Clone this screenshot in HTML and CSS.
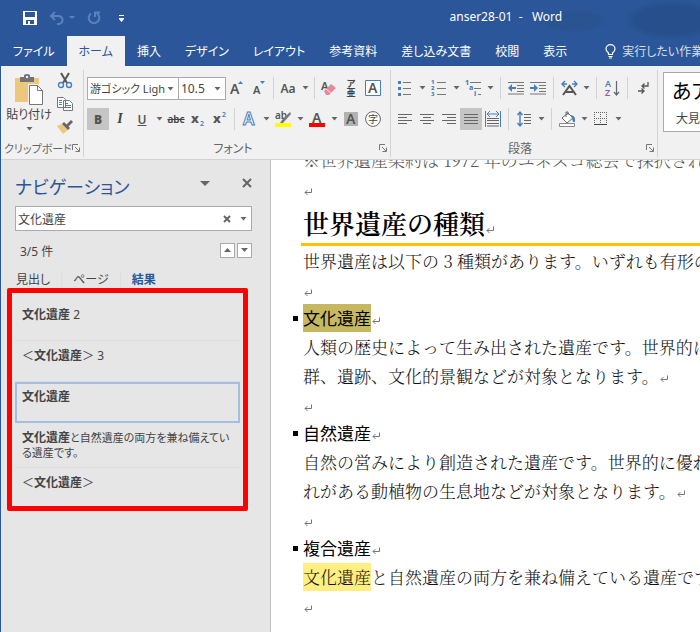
FILE: index.html
```html
<!DOCTYPE html>
<html lang="ja">
<head>
    <meta charset="UTF-8">
    <meta name="viewport" content="width=device-width, initial-scale=1.0">
    <title>anser28-01 - Word</title>
    <link rel="stylesheet" href="styles.css">
</head>
<body>
    <!-- shared symbols -->
    <svg class="symbols" aria-hidden="true">
        <symbol id="caret" viewBox="0 0 7 4"><path d="M0.5 0h6L3.5 3.6z" fill="#666"/></symbol>
        <symbol id="launcher" viewBox="0 0 8 8"><path d="M0.5 6V0.5H6M3 3l4 4M7.500 3.500v4h-4" fill="none" stroke="#777"/></symbol>
        <symbol id="mark" viewBox="0 0 8 8"><path d="M7.500 0.500V4.500H1M3.500 2L1 4.500L3.500 7" fill="none" stroke="#777"/></symbol>
    </svg>

    <div class="window">
        <header class="top">
            <div class="titlebar">
                <div class="quick">
                    <button class="quick-btn" aria-label="上書き保存">
                        <svg width="14" height="14" viewBox="0 0 14 14"><path d="M0 0h14v14H0z" fill="#fff"/><path d="M2 1h10v5H2zM3 9h8v4H3z" fill="#2b579a"/><path d="M5 10h2v3H5z" fill="#fff"/></svg>
                    </button>
                    <button class="quick-btn" aria-label="元に戻す">
                        <svg width="26" height="14" viewBox="0 0 26 14"><path d="M6 1L2 5l4 4M2 5h7a4 4 0 0 1 1 8H8" fill="none" stroke="#5d82bb" stroke-width="2"/><path d="M20 5h6l-3 3z" fill="#5d82bb"/></svg>
                    </button>
                    <button class="quick-btn" aria-label="繰り返し">
                        <svg width="14" height="14" viewBox="0 0 14 14"><path d="M4 2.500a5.300 5.300 0 1 0 6 0M8 6V1.500h5" fill="none" stroke="#5d82bb" stroke-width="2"/></svg>
                    </button>
                    <button class="quick-btn" aria-label="クイックアクセスのカスタマイズ">
                        <svg width="5" height="7" viewBox="0 0 5 7"><path d="M0 0h5v1H0zM0 3h5v1L2.500 7L0 4z" fill="#fff"/></svg>
                    </button>
                </div>
                <div class="title">anser28-01 &nbsp;- &nbsp;&nbsp;Word</div>
            </div>
            <nav class="tabs">
                <button class="tab">ファイル</button>
                <button class="tab active">ホーム</button>
                <button class="tab">挿入</button>
                <button class="tab">デザイン</button>
                <button class="tab">レイアウト</button>
                <button class="tab">参考資料</button>
                <button class="tab">差し込み文書</button>
                <button class="tab">校閲</button>
                <button class="tab">表示</button>
                <button class="tab tell">
                    <svg width="11" height="15" viewBox="0 0 11 15"><path d="M3.500 10.500V9C2 7.800 1 6.500 1 5a4.500 4.300 0 0 1 9 0c0 1.500-1 2.800-2.500 4v1.500zM3.500 12.500h4M4 14h3" fill="none" stroke="#fff" stroke-width="1.200"/></svg>
                    実行したい作業
                </button>
            </nav>
        </header>

        <div class="ribbon">
            <section class="group clipboard">
                <div class="group-main">
                    <button class="paste">
                        <svg width="28" height="31" viewBox="0 0 28 31"><path d="M0 4h24v24H0z" fill="#edc77c"/><path d="M5 3h4V1q3-2 6 0v2h4v5H5z" fill="#737373"/><circle cx="12" cy="3" r="1.200" fill="#f1f1f1"/><path d="M13 10h10l5 5v16H13z" fill="#f1f1f1"/><path d="M14.500 11.500h8l5 5v14h-13z" fill="#fff" stroke="#777"/><path d="M22.500 11.500v5h5" fill="none" stroke="#777"/></svg>
                        <span>貼り付け</span>
                        <svg class="caret" width="7" height="4"><use href="#caret"/></svg>
                    </button>
                    <div class="clip-tools">
                        <button class="tool" aria-label="切り取り">
                            <svg width="16" height="16" viewBox="0 0 16 16"><path d="M4 0l6 10M12 0L6 10" stroke="#555" stroke-width="2"/><circle cx="4" cy="12" r="2.500" fill="none" stroke="#4a7ebb" stroke-width="1.400"/><circle cx="12" cy="12" r="2.500" fill="none" stroke="#4a7ebb" stroke-width="1.400"/></svg>
                        </button>
                        <button class="tool" aria-label="コピー">
                            <svg width="16" height="16" viewBox="0 0 16 16"><path d="M0.500 1.500h6l2 2v8h-8zM6.500 4.500h6l3 3v7h-9z" fill="#fff" stroke="#777"/><path d="M2 4.500h3M2 6.500h3M2 8.500h3M8 7.500h3M8 9.500h6M8 11.500h6" stroke="#4a7ebb"/></svg>
                        </button>
                        <button class="tool" aria-label="書式のコピー">
                            <svg width="16" height="16" viewBox="0 0 16 16"><path d="M0 7l5-2 6 6-5 4z" fill="#edc77c"/><path d="M5 5l2-2 6 6-2 2z" fill="#666"/><path d="M9 6l5-5 2 2-5 5z" fill="#666"/></svg>
                        </button>
                    </div>
                </div>
                <div class="group-label"><span>クリップボード</span><button class="launch" aria-label="クリップボードの設定"><svg width="8" height="8"><use href="#launcher"/></svg></button></div>
            </section>

            <section class="group font">
                <div class="group-main rows">
                    <div class="row">
                        <select class="combo font-name" aria-label="フォント"><option>游ゴシック Ligh</option></select>
                        <select class="combo font-size" aria-label="フォント サイズ"><option>10.5</option></select>
                        <button class="tool" aria-label="フォントの拡大"><svg width="14" height="16" viewBox="0 0 14 16"><text class="glyph" x="0" y="14" font-size="14">A</text><path d="M8 4h5l-2.500-3z" fill="#4a7ebb"/></svg></button>
                        <button class="tool" aria-label="フォントの縮小"><svg width="14" height="16" viewBox="0 0 14 16"><text class="glyph" x="1" y="14" font-size="11">A</text><path d="M8 1h5l-2.500 3z" fill="#4a7ebb"/></svg></button>
                        <i class="sep"></i>
                        <button class="tool letters" aria-label="文字種の変換">Aa</button>
                        <button class="drop" aria-label="文字種の一覧"><svg class="caret" width="7" height="4"><use href="#caret"/></svg></button>
                        <i class="sep"></i>
                        <button class="tool" aria-label="書式のクリア"><svg width="16" height="16" viewBox="0 0 16 16"><text class="glyph" x="0" y="10" font-size="11">A</text><path d="M3 11l7-7 5 4-7 7-3 0z" fill="#e8899a"/><path d="M5 9l5 4" stroke="#f8dfe3"/></svg></button>
                        <button class="tool ruby" aria-label="ルビ"><span>ア</span><span>亜</span></button>
                        <button class="tool" aria-label="囲み線"><svg width="16" height="16" viewBox="0 0 16 16"><path d="M0.500 0.500h15v15h-15z" fill="#fff" stroke="#4a7ebb"/><text class="glyph" x="3" y="13" font-size="14">A</text></svg></button>
                    </div>
                    <div class="row">
                        <button class="tool on letters" aria-label="太字"><b>B</b></button>
                        <button class="tool italic" aria-label="斜体">I</button>
                        <button class="tool letters underline" aria-label="下線">U</button>
                        <button class="drop" aria-label="下線の種類"><svg class="caret" width="7" height="4"><use href="#caret"/></svg></button>
                        <button class="tool strike" aria-label="取り消し線">abc</button>
                        <button class="tool" aria-label="下付き"><svg width="16" height="16" viewBox="0 0 16 16"><text class="glyph bold" x="1" y="12" font-size="13">x</text><text class="glyph blue" x="10" y="15" font-size="7">2</text></svg></button>
                        <button class="tool" aria-label="上付き"><svg width="16" height="16" viewBox="0 0 16 16"><text class="glyph bold" x="1" y="12" font-size="13">x</text><text class="glyph blue" x="10" y="6" font-size="7">2</text></svg></button>
                        <i class="sep"></i>
                        <button class="tool" aria-label="文字の効果"><svg width="16" height="16" viewBox="0 0 16 16"><text x="2" y="14" class="effect" font-size="17">A</text></svg></button>
                        <button class="drop" aria-label="効果の一覧"><svg class="caret" width="7" height="4"><use href="#caret"/></svg></button>
                        <button class="tool" aria-label="蛍光ペンの色"><svg width="17" height="16" viewBox="0 0 17 16"><text class="glyph" x="0" y="8" font-size="10">ab</text><path d="M15 1L7 9l-2 3h3l8-9z" fill="#777"/><path d="M0 12h16v4H0z" fill="#ff0"/></svg></button>
                        <button class="drop" aria-label="蛍光ペンの一覧"><svg class="caret" width="7" height="4"><use href="#caret"/></svg></button>
                        <button class="tool" aria-label="フォントの色"><svg width="16" height="16" viewBox="0 0 16 16"><text class="glyph" x="3" y="12" font-size="14">A</text><path d="M0 12h16v4H0z" fill="#f00"/></svg></button>
                        <button class="drop" aria-label="色の一覧"><svg class="caret" width="7" height="4"><use href="#caret"/></svg></button>
                        <button class="tool" aria-label="文字の網かけ"><svg width="14" height="14" viewBox="0 0 14 14"><path d="M0 0h14v14H0z" fill="#b2b2b2"/><text class="glyph" x="2" y="12" font-size="14">A</text></svg></button>
                        <button class="tool" aria-label="囲い文字"><svg width="16" height="16" viewBox="0 0 16 16"><circle cx="8" cy="8" r="7.400" fill="#fff" stroke="#666"/><text x="3" y="12" font-size="10" fill="#444">字</text></svg></button>
                    </div>
                </div>
                <div class="group-label"><span>フォント</span><button class="launch" aria-label="フォントの設定"><svg width="8" height="8"><use href="#launcher"/></svg></button></div>
            </section>

            <section class="group paragraph">
                <div class="group-main rows">
                    <div class="row">
                        <button class="tool" aria-label="箇条書き"><svg width="16" height="16" viewBox="0 0 16 16"><path d="M1 1h3v3H1zM1 7h3v3H1zM1 13h3v3H1z" fill="#4a7ebb"/><path d="M6 2.500h8M6 8.500h8M6 14.500h8" stroke="#777"/></svg></button>
                        <button class="drop" aria-label="行頭文字"><svg class="caret" width="7" height="4"><use href="#caret"/></svg></button>
                        <button class="tool" aria-label="段落番号"><svg width="16" height="16" viewBox="0 0 16 16"><g class="glyph blue bold" font-size="6"><text x="0" y="4">1</text><text x="0" y="10">2</text><text x="0" y="16">3</text></g><path d="M6 2.500h9M6 8.500h9M6 14.500h9" stroke="#777"/></svg></button>
                        <button class="drop" aria-label="番号の種類"><svg class="caret" width="7" height="4"><use href="#caret"/></svg></button>
                        <button class="tool" aria-label="アウトライン"><svg width="17" height="16" viewBox="0 0 17 16"><g class="glyph blue bold" font-size="7"><text x="0" y="5">1</text><text x="4" y="10">a</text><text x="9" y="16">i</text></g><path d="M5 2.500h11M9 8.500h7M13 14.500h3" stroke="#777"/></svg></button>
                        <button class="drop" aria-label="アウトラインの種類"><svg class="caret" width="7" height="4"><use href="#caret"/></svg></button>
                        <i class="sep"></i>
                        <button class="tool" aria-label="インデントを減らす"><svg width="16" height="14" viewBox="0 0 16 14"><path d="M0 1.500h16M9 4.500h7M9 7.500h7M9 10.500h7M0 13h16" stroke="#777"/><path d="M0 7l4-4v3h4v2H4v3z" fill="#4a7ebb"/></svg></button>
                        <button class="tool" aria-label="インデントを増やす"><svg width="16" height="14" viewBox="0 0 16 14"><path d="M0 1.500h16M9 4.500h7M9 7.500h7M9 10.500h7M0 13h16" stroke="#777"/><path d="M8 7L4 3v3H0v2h4v3z" fill="#4a7ebb"/></svg></button>
                        <i class="sep"></i>
                        <button class="tool" aria-label="拡張書式"><svg width="17" height="15" viewBox="0 0 17 15"><path d="M2 14L8.500 5L15 14M5 11h7" fill="none" stroke="#555" stroke-width="2"/><path d="M4 0L1 3l3 3M1 3h5M13 0l3 3-3 3M16 3h-5" fill="none" stroke="#4a7ebb" stroke-width="1.400"/></svg></button>
                        <button class="drop" aria-label="拡張書式の一覧"><svg class="caret" width="7" height="4"><use href="#caret"/></svg></button>
                        <i class="sep"></i>
                        <button class="tool" aria-label="並べ替え"><svg width="15" height="17" viewBox="0 0 15 17"><text class="glyph blue" x="0" y="7" font-size="9">A</text><text class="glyph purple" x="0" y="16" font-size="9">Z</text><path d="M11.500 1v13M9 12l2.500 3L14 12" fill="none" stroke="#666" stroke-width="1.200"/></svg></button>
                        <i class="sep"></i>
                        <button class="tool" aria-label="編集記号の表示"><svg width="11" height="13" viewBox="0 0 11 13"><path d="M10 0v4H4M6.500 1.500L4 4l2.500 2.500M0 9h6M3.500 6.500L6 9l-2.500 2.500" fill="none" stroke="#555" stroke-width="1.300"/></svg></button>
                    </div>
                    <div class="row">
                        <button class="tool" aria-label="左揃え"><svg width="14" height="12" viewBox="0 0 14 12"><path d="M0 1.500h14M0 4.500h9M0 7.500h14M0 10.500h9" stroke="#666"/></svg></button>
                        <button class="tool" aria-label="中央揃え"><svg width="14" height="12" viewBox="0 0 14 12"><path d="M0 1.500h14M3 4.500h8M0 7.500h14M3 10.500h8" stroke="#666"/></svg></button>
                        <button class="tool" aria-label="右揃え"><svg width="14" height="12" viewBox="0 0 14 12"><path d="M0 1.500h14M5 4.500h9M0 7.500h14M5 10.500h9" stroke="#666"/></svg></button>
                        <button class="tool on" aria-label="両端揃え"><svg width="14" height="12" viewBox="0 0 14 12"><path d="M0 1.500h14M0 4.500h14M0 7.500h14M0 10.500h14" stroke="#666"/></svg></button>
                        <button class="tool" aria-label="均等割り付け"><svg width="16" height="16" viewBox="0 0 16 16"><path d="M0.500 0v16M15.500 0v16M2 3h12M5 0L2 3l3 3M11 0l3 3-3 3" fill="none" stroke="#4a7ebb"/><path d="M2 7.500h12M2 9.500h12M2 12.500h12M2 15h12" stroke="#666"/></svg></button>
                        <i class="sep"></i>
                        <button class="tool" aria-label="行間"><svg width="15" height="16" viewBox="0 0 15 16"><path d="M3 1v14M0.500 4L3 1l2.500 3M0.500 12L3 15l2.500-3" fill="none" stroke="#4a7ebb" stroke-width="1.400"/><path d="M7 3.500h7M7 6.500h7M7 9.500h7M7 12.500h7" stroke="#666"/></svg></button>
                        <button class="drop" aria-label="行間の一覧"><svg class="caret" width="7" height="4"><use href="#caret"/></svg></button>
                        <i class="sep"></i>
                        <button class="tool" aria-label="塗りつぶし"><svg width="17" height="16" viewBox="0 0 17 16"><path d="M3 7l6-5 5 5-6 5z" fill="#fff" stroke="#666"/><path d="M7 6V1h2v3" fill="none" stroke="#666"/><path d="M12 4q5 1 4 7l-2 0z" fill="#4a7ebb"/><path d="M0.500 12.500h15v3h-15z" fill="#fff" stroke="#888"/></svg></button>
                        <button class="drop" aria-label="塗りつぶしの色"><svg class="caret" width="7" height="4"><use href="#caret"/></svg></button>
                        <button class="tool" aria-label="罫線"><svg width="14" height="14" viewBox="0 0 14 14"><path d="M0.500 0v13M6.500 0v13M12.500 0v13M0 0.500h13M0 6.500h13" fill="none" stroke="#666" stroke-dasharray="1 1"/><path d="M0 12.500h13" stroke="#444"/></svg></button>
                        <button class="drop" aria-label="罫線の一覧"><svg class="caret" width="7" height="4"><use href="#caret"/></svg></button>
                    </div>
                </div>
                <div class="group-label"><span>段落</span><button class="launch" aria-label="段落の設定"><svg width="8" height="8"><use href="#launcher"/></svg></button></div>
            </section>

            <section class="group styles">
                <button class="style-card">
                    <span class="sample">あア</span>
                    <span class="style-name">大見</span>
                </button>
            </section>
        </div>

        <div class="workspace">
            <aside class="pane">
                <div class="pane-head">
                    <h1>ナビゲーション</h1>
                    <button class="pane-btn" aria-label="作業ウィンドウのオプション"><svg width="10" height="5" viewBox="0 0 10 5"><path d="M0 0h10L5 5z" fill="#666"/></svg></button>
                    <button class="pane-btn" aria-label="閉じる"><svg width="10" height="10" viewBox="0 0 10 10"><path d="M1 1l8 8M9 1L1 9" stroke="#666" stroke-width="2"/></svg></button>
                </div>
                <div class="search">
                    <input type="text" value="文化遺産" aria-label="文書の検索">
                    <button aria-label="検索のクリア"><svg width="8" height="8" viewBox="0 0 8 8"><path d="M1 1l6 6M7 1L1 7" stroke="#666" stroke-width="2"/></svg></button>
                    <button aria-label="検索オプション"><svg class="caret" width="7" height="4"><use href="#caret"/></svg></button>
                </div>
                <div class="count">
                    <span>3/5 件</span>
                    <button aria-label="前の結果"><svg width="7" height="4" viewBox="0 0 7 4"><path d="M0 4h7L3.500 0z" fill="#666"/></svg></button>
                    <button aria-label="次の結果"><svg width="7" height="4" viewBox="0 0 7 4"><path d="M0 0h7L3.500 4z" fill="#666"/></svg></button>
                </div>
                <div class="pane-tabs">
                    <button>見出し</button>
                    <button>ページ</button>
                    <button class="current">結果</button>
                </div>
                <ul class="results">
                    <li><b>文化遺産</b> 2</li>
                    <li>＜<b>文化遺産</b>＞ 3</li>
                    <li class="selected"><b>文化遺産</b></li>
                    <li><b>文化遺産</b><span class="excerpt">と自然遺産の両方を兼ね備えてい<br>る遺産です。</span></li>
                    <li>＜<b>文化遺産</b>＞</li>
                </ul>
            </aside>

            <main class="doc">
                <p class="cut">※世界遺産条約は 1972 年のユネスコ総会で採択され</p>
                <p><svg class="mark"><use href="#mark"/></svg></p>
                <h2>世界遺産の種類<svg class="mark"><use href="#mark"/></svg></h2>
                <p>世界遺産は以下の 3 種類があります。いずれも有形の</p>
                <p><svg class="mark"><use href="#mark"/></svg></p>
                <h3><mark class="hit">文化遺産</mark><svg class="mark"><use href="#mark"/></svg></h3>
                <p>人類の歴史によって生み出された遺産です。世界的に</p>
                <p>群、遺跡、文化的景観などが対象となります。<svg class="mark"><use href="#mark"/></svg></p>
                <p><svg class="mark"><use href="#mark"/></svg></p>
                <h3>自然遺産<svg class="mark"><use href="#mark"/></svg></h3>
                <p>自然の営みにより創造された遺産です。世界的に優れ</p>
                <p>れがある動植物の生息地などが対象となります。<svg class="mark"><use href="#mark"/></svg></p>
                <p><svg class="mark"><use href="#mark"/></svg></p>
                <h3>複合遺産<svg class="mark"><use href="#mark"/></svg></h3>
                <p><mark>文化遺産</mark>と自然遺産の両方を兼ね備えている遺産です</p>
                <p><svg class="mark"><use href="#mark"/></svg></p>
            </main>
        </div>
    </div>
</body>
</html>
```
FILE: styles.css
```css
* {
    box-sizing: border-box;
}

body {
    margin: 0;
    font-family: "Noto Sans", "Noto Sans CJK JP", sans-serif;
    font-size: 12px;
    color: #444;
    font-feature-settings: "palt";
}

button {
    font: inherit;
    font-feature-settings: inherit;
    color: inherit;
    background: none;
    border: 0;
    padding: 0;
    white-space: nowrap;
    flex-shrink: 0;
}

svg {
    display: block;
    overflow: visible;
}

.symbols {
    display: none;
}

.window {
    display: flex;
    flex-direction: column;
    min-height: 100vh;
    border-left: 1px solid #2b579a;
    overflow: hidden;
    background: #fff;
}

/* title bar and tabs */
.top {
    background:
        radial-gradient(ellipse 50px 20px at 96% 20px, #264f8b 70%, transparent),
        radial-gradient(ellipse 36px 12px at 82% 21px, #295391 70%, transparent),
        #2b579a;
    color: #fff;
}

.titlebar {
    display: flex;
    align-items: center;
    height: 36px;
}

.quick {
    display: flex;
    align-items: center;
    gap: 12px;
    flex: 1;
    padding-left: 22px;
}

.quick-btn {
    display: flex;
}

.quick-btn:last-child {
    margin-left: 6px;
}

.title {
    flex: 1;
    padding: 0 0 4px 176px;
    white-space: nowrap;
}

.tabs {
    display: flex;
    height: 30px;
    overflow: hidden;
}

.tab {
    padding: 0 12px;
}

.tab.active {
    background: #f1f1f1;
    color: #2b579a;
}

.tell {
    display: flex;
    align-items: center;
    gap: 6px;
    margin-left: 14px;
    padding-right: 0;
    color: #d5deec;
}

/* ribbon */
.ribbon {
    display: flex;
    height: 94px;
    padding: 4px 0 2px;
    background: #f1f1f1;
    border-bottom: 1px solid #d2d2d2;
    overflow: hidden;
}

.group {
    display: flex;
    flex-direction: column;
    flex-shrink: 0;
    padding: 0 3px;
    border-right: 1px solid #d2d2d2;
}

.group-main {
    display: flex;
    flex: 1;
}

.rows {
    flex-direction: column;
    gap: 9px;
    padding-top: 7px;
}

.row {
    display: flex;
    height: 22px;
}

.tool,
.drop {
    display: flex;
    align-items: center;
    justify-content: center;
    width: 22px;
    height: 22px;
}

.drop {
    width: 12px;
}

.on {
    background: #c5c5c5;
}

.sep {
    width: 1px;
    margin: 0 3px;
    background: #d2d2d2;
}

.paragraph .sep {
    margin: 0 4px;
}

.group-label {
    display: flex;
    align-items: center;
    height: 18px;
    color: #666;
}

.group-label span {
    flex: 1;
    text-align: center;
    white-space: nowrap;
}

.launch {
    width: 8px;
}

.clipboard {
    width: 83px;
}

.clipboard .group-label {
    font-size: 11px;
}

.clipboard .group-label span {
    text-align: left;
}

.paste {
    display: flex;
    flex-direction: column;
    align-items: center;
    width: 50px;
    padding-top: 4px;
}

.paste span {
    line-height: 20px;
}

.paste .caret {
    margin-top: 2px;
}

.clip-tools {
    display: flex;
    flex-direction: column;
    gap: 1px;
}

.font {
    width: 307px;
}

.paragraph {
    width: 267px;
}

.combo {
    appearance: none;
    height: 23px;
    padding: 0 2px;
    border: 1px solid #aaa;
    border-radius: 0;
    background: #fff url("data:image/svg+xml,%3Csvg xmlns='http://www.w3.org/2000/svg' width='7' height='4'%3E%3Cpath d='M.5 0h6l-3 3.600z' fill='%23666'/%3E%3C/svg%3E") no-repeat right 4px center;
    color: #444;
    font: inherit;
    font-feature-settings: inherit;
}

.font-name {
    width: 92px;
    font-size: 11px;
}

.font-size {
    width: 48px;
    margin-left: -1px;
}

.letters {
    font-weight: 600;
    color: #555;
}

.underline {
    text-decoration: underline;
}

.italic {
    font-family: "Liberation Serif", serif;
    font-size: 14px;
    font-style: italic;
    font-weight: bold;
}

.strike {
    font-size: 10px;
    font-weight: 600;
    text-decoration: line-through;
}

.ruby {
    flex-direction: column;
    font-size: 9px;
    font-weight: bold;
    line-height: 9px;
}

.glyph {
    font-weight: 600;
    fill: #555;
}

.bold {
    font-weight: 800;
}

.blue {
    fill: #4a7ebb;
}

.purple {
    fill: #8a56b0;
}

.effect {
    font-weight: 600;
    fill: #fff;
    stroke: #4a7ebb;
}

.styles {
    flex: 1;
    min-width: 0;
    padding-left: 5px;
    padding-right: 0;
    border-right: 0;
}

.style-card {
    display: flex;
    flex-direction: column;
    align-items: flex-start;
    width: 76px;
    height: 60px;
    margin-top: 2px;
    padding-left: 8px;
    border: 1px solid #aaa;
    background: #fff;
}

.sample {
    font-size: 20px;
    line-height: 38px;
    color: #000;
}

.style-name {
    padding-left: 4px;
    line-height: 16px;
}

/* navigation pane */
.workspace {
    display: flex;
    flex: 1;
}

.pane {
    width: 270px;
    flex-shrink: 0;
    padding: 15px 18px 0 14px;
    background: #e6e6e6;
    border-right: 1px solid #c0c0c0;
}

.pane-head {
    display: flex;
    align-items: center;
    height: 24px;
}

.pane-head h1 {
    flex: 1;
    margin: 0;
    font-size: 18px;
    font-weight: normal;
    line-height: 24px;
    color: #2b579a;
}

.pane-btn {
    display: flex;
    justify-content: center;
    width: 10px;
    margin: 0 0 8px 32px;
}

.search {
    display: flex;
    align-items: center;
    height: 25px;
    margin-top: 7px;
    border: 1px solid #ababab;
    background: #fff;
}

.search input {
    flex: 1;
    min-width: 0;
    padding: 0 2px;
    border: 0;
    background: none;
    color: #444;
    font: inherit;
    font-feature-settings: inherit;
}

.search button {
    margin-right: 9px;
}

.search button:last-child {
    margin-right: 4px;
}

.count {
    display: flex;
    align-items: center;
    gap: 2px;
    height: 40px;
    padding-left: 5px;
}

.count span {
    flex: 1;
}

.count button {
    display: flex;
    align-items: center;
    justify-content: center;
    width: 15px;
    height: 15px;
    margin-bottom: 2px;
    border: 1px solid #ababab;
    background: #fff;
}

.pane-tabs {
    display: flex;
    height: 17px;
    line-height: 17px;
}

.pane-tabs button {
    padding: 0 11px;
    border-right: 1px solid #dedede;
}

.pane-tabs button:first-child {
    padding-left: 1px;
}

.pane-tabs .current {
    border: 0;
    font-weight: bold;
    color: #2b579a;
}

/* list of hits, framed in red */
.results {
    margin: 0 4px 0 -8px;
    padding: 7px 3px 0;
    border: 5px solid #f00;
    border-radius: 2px;
    list-style: none;
    line-height: 15px;
}

.results li {
    min-height: 41px;
    padding: 7px 0 7px 7px;
    border-bottom: 1px solid #dcdcdc;
    white-space: nowrap;
}

.results .selected {
    padding: 5px;
    border: 2px solid #a3bde3;
}

.results li:last-child {
    min-height: 38px;
    border: 0;
}

.excerpt {
    font-size: 11px;
}

/* document */
.doc {
    flex: 1;
    min-width: 0;
    padding-left: 30px;
    overflow: hidden;
    font-family: "Noto Serif CJK JP", "Noto Sans CJK JP", serif;
    font-size: 17px;
    font-feature-settings: normal;
    color: #111;
    white-space: nowrap;
}

.doc p,
.doc h3 {
    margin: 0;
    padding-left: 2px;
    font-size: 17px;
    font-weight: 300;
    line-height: 29px;
}

.doc .cut {
    margin-top: -15px;
    color: #555;
}

.doc h2 {
    margin: 0;
    padding-left: 2px;
    border-bottom: 3px solid #ffc000;
    font-size: 26px;
    font-weight: 600;
    line-height: 40px;
    color: #000;
}

.doc h3 {
    display: flex;
    align-items: center;
    margin-left: -8px;
    padding: 0;
    font-family: "Noto Sans CJK JP", sans-serif;
    font-weight: normal;
    line-height: 28px;
    color: #000;
}

.doc h3::before {
    content: "";
    width: 5px;
    height: 5px;
    margin-right: 5px;
    background: #000;
}

mark {
    display: inline-block;
    background: #ffee80;
    color: inherit;
    line-height: 28px;
}

.hit {
    background: #c6b860;
}

.mark {
    display: inline-block;
    width: 8px;
    height: 8px;
    margin-left: 1px;
}

h3 .mark {
    margin-top: 6px;
}
```
